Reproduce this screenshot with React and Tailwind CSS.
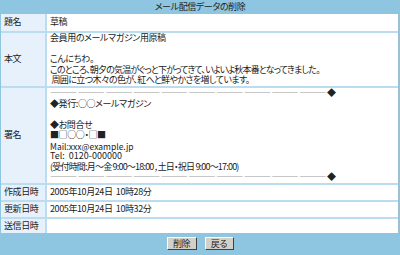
import React from "react";

const font = { fontFamily: '"Noto Sans CJK JP", "Noto Sans", sans-serif', fontFeatureSettings: '"palt"' };

const dash = "―".repeat(30);

function Row({ label, h, children }) {
  return (
    <div className={`flex ${h}`}>
      <div className="w-[44px] shrink-0 bg-[#e6f1fc] flex items-center pl-[3px]">{label}</div>
      <div className="w-[2px] shrink-0 bg-[#bcdcef]" />
      <div className="flex-1 bg-white flex items-center pl-[3px]">{children}</div>
    </div>
  );
}

function Dash() {
  return (
    <div className="flex items-center">
      <span className="tracking-[0.7px]">{dash}</span>
      <span className="tracking-normal">◆</span>
    </div>
  );
}

export default function App() {
  return (
    <div className="w-[400px] h-[255px] bg-[#8ec5e1] text-[9px] leading-[10.5px] tracking-[-0.4px] text-[#222]" style={font}>
      <div className="h-[14px] flex items-center justify-center">メール配信データの削除</div>
      <div className="ml-[1px] w-[398px] bg-[#bcdcef] flex flex-col gap-[2px] border-r border-[#9cc0d6]">
        <Row label="題名" h="h-[17px]">草稿</Row>
        <Row label="本文" h="h-[53px]">
          <div>
            <div>会員用のメールマガジン用原稿</div>
            <div>&nbsp;</div>
            <div>こんにちわ。</div>
            <div className="tracking-[-0.8px]">このところ、朝夕の気温がぐっと下がってきて、いよいよ秋本番となってきました。</div>
            <div className="tracking-[-0.6px]">&nbsp;周囲に立つ木々の色が、紅へと鮮やかさを増しています。</div>
          </div>
        </Row>
        <Row label="署名" h="h-[95px]">
          <div>
            <Dash />
            <div>◆発行:○○メールマガジン</div>
            <div>&nbsp;</div>
            <div>◆お問合せ</div>
            <div>■□○○・□■</div>
            <div className="text-[8.5px] tracking-normal">Mail:xxx@example.jp</div>
            <div className="tracking-normal">Tel:&nbsp; 0120-000000</div>
            <div className="tracking-[-0.8px]">(受付時間:月～金 9:00～18:00 , 土日・祝日 9:00～17:00)</div>
            <Dash />
          </div>
        </Row>
        <Row label="作成日時" h="h-[15px]">2005年10月24日&nbsp; 10時28分</Row>
        <Row label="更新日時" h="h-[15px]">2005年10月24日&nbsp; 10時32分</Row>
        <Row label="送信日時" h="h-[14px]"></Row>
      </div>
      <div className="flex justify-center gap-[8px] mt-[4px]">
        <button className="w-[30px] h-[13px] bg-[#d4d0c8] border border-t-white border-l-white border-r-[#404040] border-b-[#404040] text-[9px] leading-none flex items-center justify-center" style={font}>削除</button>
        <button className="w-[29px] h-[13px] bg-[#d4d0c8] border border-t-white border-l-white border-r-[#404040] border-b-[#404040] text-[9px] leading-none flex items-center justify-center" style={font}>戻る</button>
      </div>
    </div>
  );
}
